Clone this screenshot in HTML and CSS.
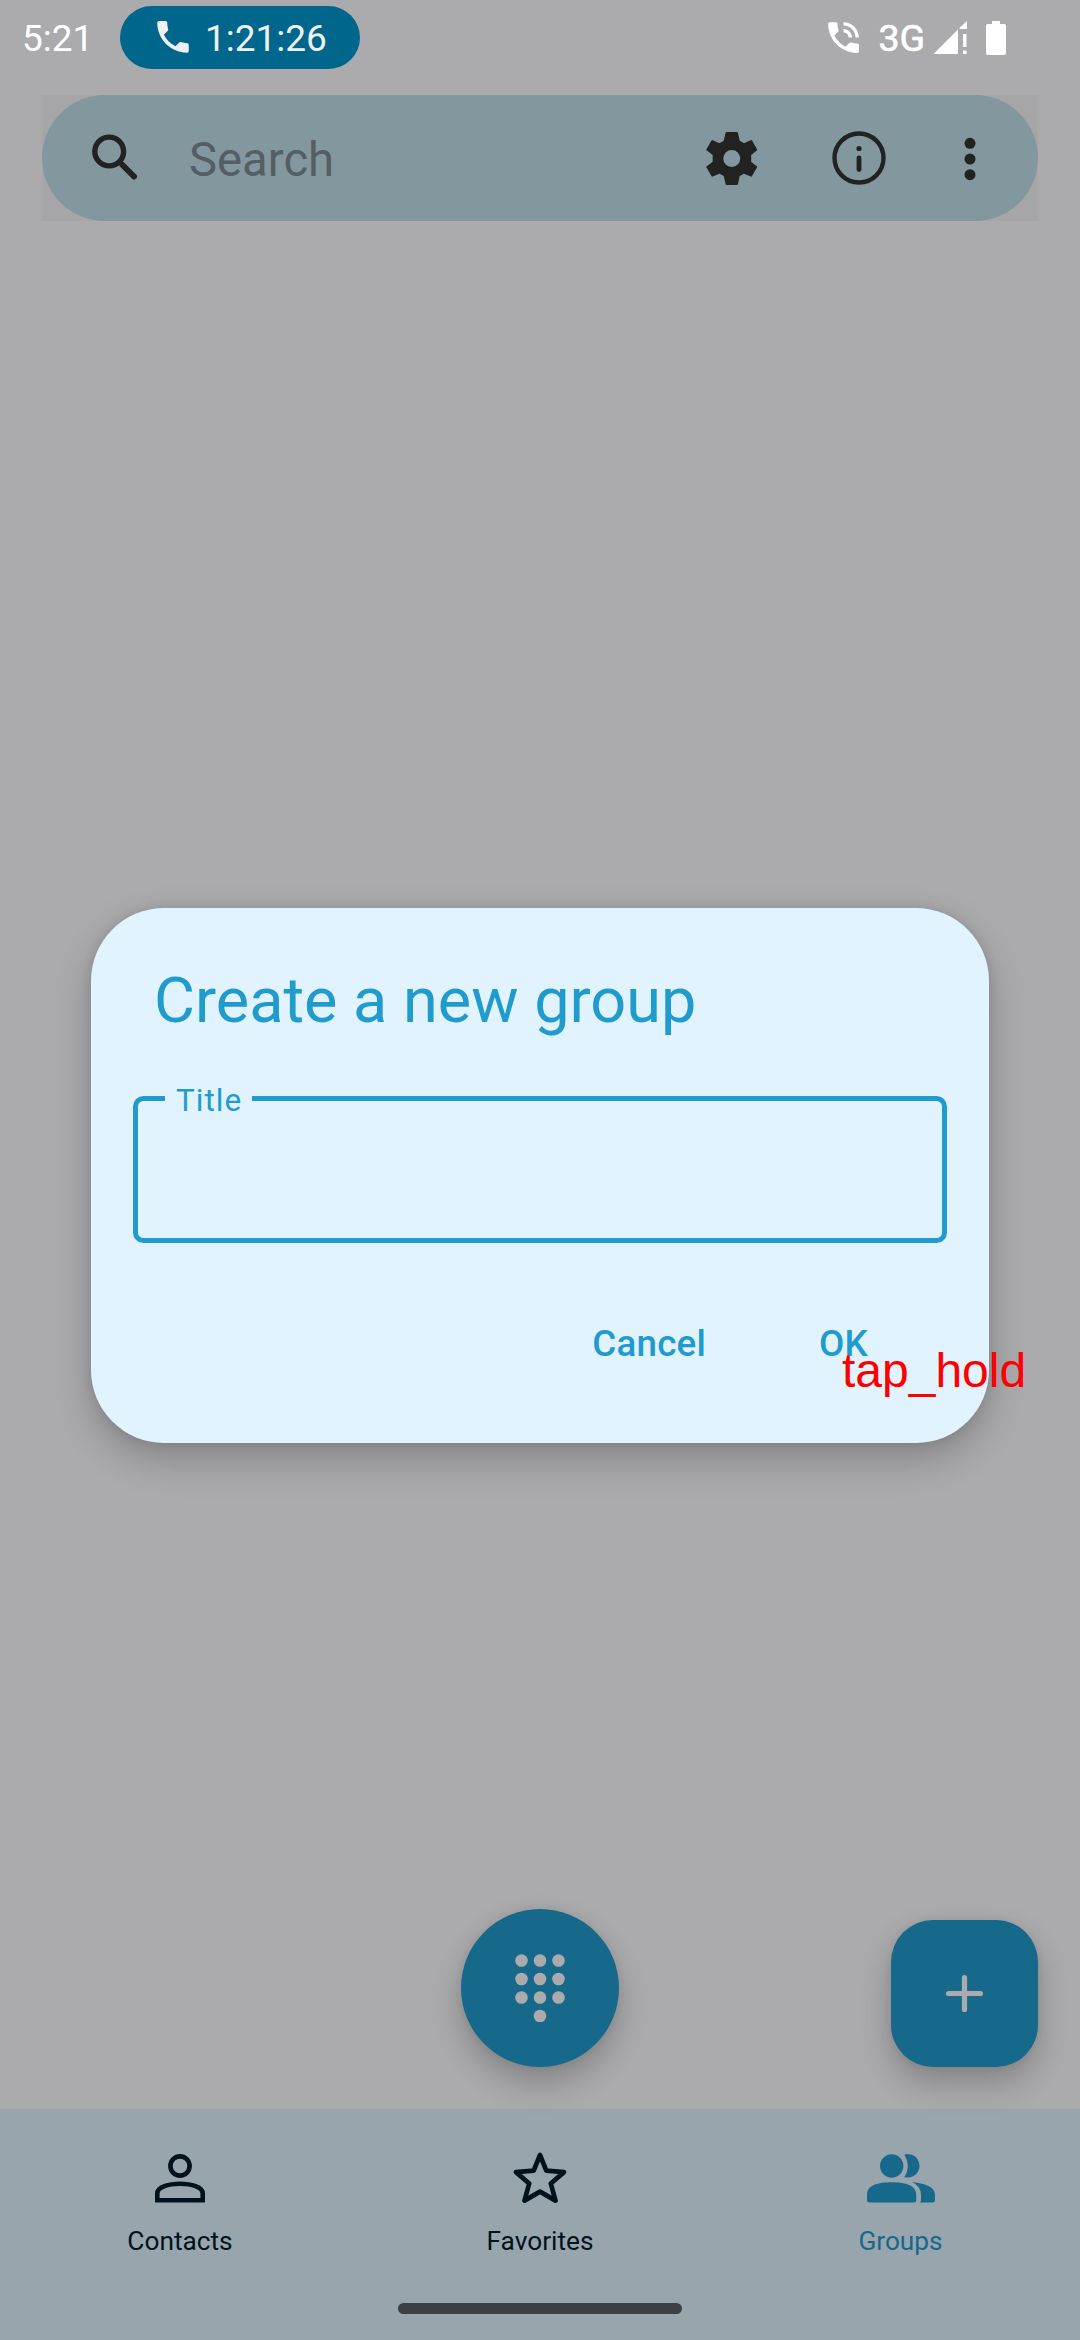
FILE: index.html
```html
<!DOCTYPE html>
<html lang="en">
<head>
<meta charset="utf-8">
<title>Contacts</title>
<link rel="stylesheet" href="styles.css">
</head>
<body>
<div class="screen">
  <header class="status">
    <span class="clock">5:21</span>
    <div class="call-chip">
      <svg class="call-icon" viewBox="0 0 24 24"><path d="M20.2 15.5c-1.2 0-2.5-.2-3.6-.6-.3-.1-.7 0-1 .2l-2.2 2.2c-2.8-1.5-5.2-3.8-6.600-6.600l2.200-2.200c.3-.3.4-.7.2-1-.3-1.100-.5-2.400-.5-3.600 0-.5-.4-1-1-1H4c-.5 0-1 .5-1 1C3 13.300 10.700 21 20.100 21c.5 0 .9-.5.9-1v-3.500c0-.5-.4-1-.8-1z"/></svg>
      <span>1:21:26</span>
    </div>
    <div class="status-right">
      <svg class="talk-icon" viewBox="0 0 24 24"><path d="M20 15.500c-1.250 0-2.450-.2-3.570-.57-.35-.11-.74-.03-1.020.24l-2.200 2.200c-2.830-1.440-5.150-3.750-6.590-6.590l2.200-2.200c.28-.28.36-.67.25-1.020C8.700 6.450 8.500 5.250 8.500 4c0-.55-.45-1-1-1H4c-.55 0-1 .45-1 1 0 9.390 7.610 17 17 17 .55 0 1-.45 1-1v-3.500c0-.55-.45-1-1-1zM19 12h2c0-4.970-4.030-9-9-9v2c3.870 0 7 3.130 7 7zm-4 0h2c0-2.760-2.240-5-5-5v2c1.660 0 3 1.340 3 3z"/></svg>
      <span class="network">3G</span>
      <svg class="signal-icon" viewBox="0 0 33 33"><path d="M0 33V32.500L24 8.500V33zM25.500 7L33 0V8H25.500zM29 13H32.500V26H29zM29 29.500H32.500V33H29z"/></svg>
      <svg class="battery-icon" viewBox="0 0 20 34"><path d="M6 0H14V3H18Q20 3 20 5V32Q20 34 18 34H2Q0 34 0 32V5Q0 3 2 3H6z"/></svg>
    </div>
  </header>

  <div class="search-wrap">
    <div class="search-bar">
      <svg class="search-icon outline" viewBox="0 0 46 46"><circle cx="17.200" cy="17.500" r="14.400" stroke-width="5.400"/><path d="M30.500 31L42 42.500" stroke-width="6" stroke-linecap="round"/><path d="M27.500 28L32 32.500" stroke-width="4"/></svg>
      <span class="search-text">Search</span>
      <svg class="gear-icon" viewBox="137 393 155 159"><path fill-rule="evenodd" stroke="currentColor" stroke-width="6" stroke-linejoin="round" d="M199 396H230L236 421L251 430L273 420L288 446L270 460V484L288 498L273 524L251 515L236 523L230 549H199L193 523L178 515L156 524L141 498L160 484V460L141 446L156 420L178 430L193 421zM214.500 444A28.500 28.500 0 1 0 214.500 501A28.500 28.500 0 1 0 214.500 444z"/></svg>
      <svg class="info-icon" viewBox="0 0 54 54"><circle cx="27" cy="27" r="24.500" fill="none" stroke="currentColor" stroke-width="4.400"/><circle cx="27" cy="17.500" r="2.600"/><rect x="24.600" y="24.500" width="4.800" height="16.500" rx="2.400"/></svg>
      <svg class="more-icon" viewBox="0 0 12 44"><circle cx="6" cy="6.300" r="5.500"/><circle cx="6" cy="22" r="5.500"/><circle cx="6" cy="37.700" r="5.500"/></svg>
    </div>
  </div>

  <main class="content"></main>

  <nav class="nav">
    <div class="tab">
      <svg class="person-icon outline" viewBox="0 0 50 49" stroke-width="4.600"><circle cx="25" cy="12" r="9.600"/><path d="M2.300 46.200V39.500C2.300 26.500 47.700 26.500 47.700 39.500V46.200z"/></svg>
      <span>Contacts</span>
    </div>
    <div class="tab">
      <svg class="star-icon outline" viewBox="0 0 54 52" stroke-width="4.700" stroke-linejoin="round"><path d="M27 3L33.300 18.600L51 20.100L37.800 31.500L42.500 48.600L27 39.600L11.500 48.600L16.200 31.500L3 20.100L20.700 18.600z"/></svg>
      <span>Favorites</span>
    </div>
    <div class="tab tab-active">
      <svg class="groups-icon" viewBox="0 0 68 49"><circle cx="24.700" cy="12" r="11.700"/><path d="M37.300 .7C48 -1.500 52.500 6 52.500 12S47.500 25 37.300 23.300Q44.500 12 37.300 .7zM0 41C0 31 11 28.300 24.700 28.300S49.300 31.500 49.300 41V46Q49.300 48.500 46.800 48.500H2.500Q0 48.500 0 46zM45 28C58 29.500 68 32.500 68 41V46Q68 48.500 65.500 48.500H53Q54 47.500 54 45V41Q54 32 45 28z"/></svg>
      <span>Groups</span>
    </div>
  </nav>
  <div class="home-indicator"></div>

  <div class="fab fab-dial">
    <svg class="dial-icon" viewBox="0 0 50 68"><circle cx="6.500" cy="6.500" r="6.300"/><circle cx="25" cy="6.500" r="6.300"/><circle cx="43.500" cy="6.500" r="6.300"/><circle cx="6.500" cy="25" r="6.300"/><circle cx="25" cy="25" r="6.300"/><circle cx="43.500" cy="25" r="6.300"/><circle cx="6.500" cy="43.500" r="6.300"/><circle cx="25" cy="43.500" r="6.300"/><circle cx="43.500" cy="43.500" r="6.300"/><circle cx="25" cy="62" r="6.300"/></svg>
  </div>
  <div class="fab fab-add">
    <svg class="plus-icon" viewBox="0 0 37 37"><path d="M18.500 2.600V34.400M2.600 18.500H34.400" stroke="currentColor" stroke-width="5.200" stroke-linecap="round"/></svg>
  </div>

  <section class="dialog">
    <h1 class="dialog-title">Create a new group</h1>
    <fieldset class="field"><legend><span>Title</span></legend></fieldset>
    <div class="actions">
      <span>Cancel</span>
      <span>OK</span>
    </div>
  </section>
  <div class="gesture">tap_hold</div>
</div>
</body>
</html>
```
FILE: styles.css
```css
* { box-sizing: border-box; }
body { margin: 0; font-family: Roboto, sans-serif; }
svg { display: block; flex: none; fill: currentColor; }
.outline { fill: none; stroke: currentColor; }
.screen {
  position: relative;
  display: flex;
  flex-direction: column;
  width: 1080px;
  height: 2340px;
  overflow: hidden;
  background: #ababad;
}
.status {
  display: flex;
  align-items: center;
  height: 95px;
  padding: 0 74px 20px 22px;
  color: #fff;
  font-size: 37px;
  line-height: 44px;
}
.clock { width: 98px; padding-top: 3px; }
.call-chip {
  display: flex;
  align-items: center;
  width: 240px;
  height: 63px;
  margin-top: -1px;
  padding-left: 32px;
  gap: 11px;
  border-radius: 32px;
  background: #00668b;
  color: #f0f0f4;
}
.call-chip span { padding-top: 3px; }
.call-icon { width: 42px; height: 42px; }
.status-right { display: flex; align-items: center; margin-left: auto; }
.talk-icon { width: 41px; height: 41px; }
.network { margin-left: 14px; font-size: 37.500px; -webkit-text-stroke: .6px currentColor; }
.signal-icon { width: 33px; height: 33px; margin-left: 9px; }
.battery-icon { width: 20px; height: 34px; margin-left: 19px; }

.search-wrap { margin: 0 42px; background: #a6a6a8; }
.search-bar {
  display: flex;
  align-items: center;
  height: 126px;
  padding-left: 50px;
  border-radius: 63px;
  background: #83979f;
  color: #222;
}
.search-icon { width: 46px; height: 46px; margin-bottom: 3px; }
.search-text { width: 517px; margin-left: 51px; padding-top: 3px; color: #535f64; font-size: 47.250px; line-height: 56px; }
.gear-icon { width: 51.500px; height: 53px; margin-right: 74px; }
.info-icon { width: 54px; height: 54px; margin-right: 78px; }
.more-icon { width: 12px; height: 44px; margin-top: 2px; }

.content { flex: 1; }
.nav {
  display: grid;
  grid-template-columns: repeat(3, 1fr);
  height: 231px;
  background: #99a5ad;
  color: #00131c;
}
.tab { display: flex; flex-direction: column; align-items: center; font-size: 26.250px; line-height: 32px; }
.tab svg { margin-top: 45px; margin-bottom: 22px; }
.tab-active { padding-left: 1px; color: #17698c; }
.person-icon { width: 50px; height: 49px; }
.star-icon { width: 54px; height: 52px; }
.tab .star-icon { margin-top: 43px; margin-bottom: 21px; }
.groups-icon { width: 68px; height: 49px; }
.home-indicator {
  position: absolute;
  left: 398px;
  top: 2303px;
  width: 284px;
  height: 11px;
  border-radius: 6px;
  background: #3c4144;
}

.fab {
  position: absolute;
  display: flex;
  align-items: center;
  justify-content: center;
  background: #17698c;
  color: #ababad;
  box-shadow: 0 16px 32px rgba(0, 0, 0, .22), 0 0 8px rgba(0, 0, 0, .07);
}
.fab-dial { left: 461px; top: 1909px; width: 158px; height: 158px; border-radius: 50%; }
.fab-add { left: 891px; top: 1920px; width: 147px; height: 147px; border-radius: 42px; }
.dial-icon { width: 50px; height: 68px; }
.plus-icon { width: 37px; height: 37px; }

.dialog {
  position: absolute;
  left: 91px;
  top: 908px;
  width: 898px;
  height: 535px;
  padding: 56px 42px 0;
  border-radius: 73px;
  background: #e0f3ff;
  color: #209bce;
  box-shadow: 0 16px 38px rgba(0, 0, 0, .22), 0 0 12px rgba(0, 0, 0, .1);
}
.dialog-title { margin: 0 0 58px 21px; font-size: 63px; font-weight: 400; line-height: 74px; }
.field {
  height: 147px;
  margin: 0;
  padding: 0 27px;
  border: 5px solid #209bce;
  border-radius: 10.500px;
}
.field legend { height: 5px; padding: 0 10px 0 11px; font-size: 31.500px; line-height: 5px; letter-spacing: 1px; }
.field legend span { position: relative; top: 2px; }
.actions { display: flex; justify-content: flex-end; gap: 113px; margin-top: 79px; padding-right: 79px; font-size: 36.750px; font-weight: 500; line-height: 44px; letter-spacing: .2px; }
.gesture {
  position: absolute;
  left: 842px;
  top: 1343px;
  color: #f00;
  font: 48px/55px "Liberation Sans", sans-serif;
}
```
